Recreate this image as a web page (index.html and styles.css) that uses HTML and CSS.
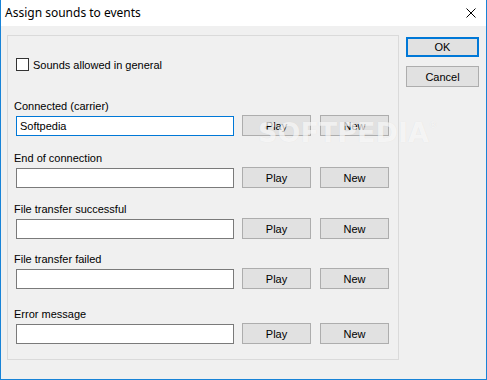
FILE: index.html
```html
<!DOCTYPE html>
<html lang="en">
<head>
  <meta charset="UTF-8" />
  <title>Assign sounds to events</title>
  <link rel="stylesheet" href="styles.css">
</head>
<body>
  <div class="window">
    <div class="titlebar">
      <span class="title">Assign sounds to events</span>
      <svg class="close" width="10" height="10" viewBox="0 0 10 10">
        <path d="M0.5 0.5 L9.5 9.5 M9.5 0.5 L0.5 9.5" stroke="#000" stroke-width="1" fill="none"/>
      </svg>
    </div>

    <div class="client">
      <div class="frame">
        <label class="check">
          <span class="box"></span>
          <span>Sounds allowed in general</span>
        </label>

        <div class="row row-first">
          <div class="label">Connected (carrier)</div>
          <div class="controls">
            <div class="edit focused">Softpedia</div>
            <button class="btn">Play</button>
            <button class="btn">New</button>
          </div>
        </div>

        <div class="row row-wide">
          <div class="label">End of connection</div>
          <div class="controls">
            <div class="edit"></div>
            <button class="btn">Play</button>
            <button class="btn">New</button>
          </div>
        </div>

        <div class="row">
          <div class="label">File transfer successful</div>
          <div class="controls">
            <div class="edit"></div>
            <button class="btn">Play</button>
            <button class="btn">New</button>
          </div>
        </div>

        <div class="row row-tight">
          <div class="label">File transfer failed</div>
          <div class="controls">
            <div class="edit"></div>
            <button class="btn">Play</button>
            <button class="btn">New</button>
          </div>
        </div>

        <div class="row row-last">
          <div class="label">Error message</div>
          <div class="controls">
            <div class="edit"></div>
            <button class="btn">Play</button>
            <button class="btn">New</button>
          </div>
        </div>

        <div class="watermark">SOFTPEDIA<sup>®</sup></div>
      </div>

      <div class="side">
        <button class="btn btn-default">OK</button>
        <button class="btn">Cancel</button>
      </div>
    </div>
  </div>
</body>
</html>
```

FILE: styles.css
```css
/* Reset & base */
* { box-sizing: border-box; margin: 0; padding: 0; }
body {
  font-family: 'Liberation Sans', Arial, sans-serif;
  font-size: 11px;
  color: #000;
  background: #f0f0f0;
}

/* Window chrome */
.window {
  width: 487px; height: 380px;
  background: #f0f0f0;
  border: 1px solid #1883d7;
  border-top: none;
  display: flex; flex-direction: column;
}
.titlebar {
  height: 26px;
  background: #fff;
  display: flex; align-items: center; justify-content: space-between;
  padding: 0 10px 0 4px;
}
.title {
  font-family: 'Noto Sans', 'Liberation Sans', sans-serif;
  font-size: 12px;
  margin-top: -1px;
}
.close { display: block; margin-top: -1px; }

/* Client area */
.client {
  display: flex;
  gap: 7px;
  padding: 9px 0 0 6px;
}
.frame {
  position: relative;
  width: 392px; height: 325px;
  border: 1px solid #dadada;
  padding: 0 0 0 8px;
}

/* Checkbox */
.check { display: flex; align-items: center; gap: 4px; margin-top: 22px; height: 13px; }
.box {
  width: 13px; height: 13px;
  background: #fff;
  border: 1px solid #333;
}

/* Event rows (spacing is a bit uneven in the original dialog) */
.row + .row { margin-top: 15px; }
.row-first { margin-top: 29px; }
.row.row-wide { margin-top: 16px; }
.row.row-tight { margin-top: 14px; }
.row.row-last { margin-top: 19px; }
.label { line-height: 13px; margin-left: -2px; margin-bottom: 2px; }
.controls { display: flex; align-items: flex-end; height: 21px; }
.edit {
  width: 218px; height: 20px;
  background: #fff;
  border: 1px solid #7a7a7a;
  padding: 0 3px;
  line-height: 18px;
  margin-right: 8px;
}
.edit.focused { border-color: #0078d7; }

/* Buttons */
.btn {
  font-family: inherit; font-size: 11px; color: #000;
  width: 69px; height: 21px;
  background: #e1e1e1;
  border: 1px solid #adadad;
}
.controls .btn + .btn { margin-left: 9px; }
.controls .btn { align-self: flex-start; }

.side { display: flex; flex-direction: column; gap: 9px; padding-top: 2px; }
.side .btn { width: 73px; }
.side .btn-default { height: 20px; border: 2px solid #0078d7; }

/* Watermark overlay */
.watermark {
  position: absolute; left: 250px; top: 81px;
  font-family: 'DejaVu Sans', sans-serif; font-weight: bold;
  font-size: 27px;
  color: rgba(255, 255, 255, 0.7);
  text-shadow: 0 0 1px rgba(0, 0, 0, 0.08);
  pointer-events: none;
}
.watermark sup { font-size: 9px; font-weight: normal; vertical-align: 14px; }
```
